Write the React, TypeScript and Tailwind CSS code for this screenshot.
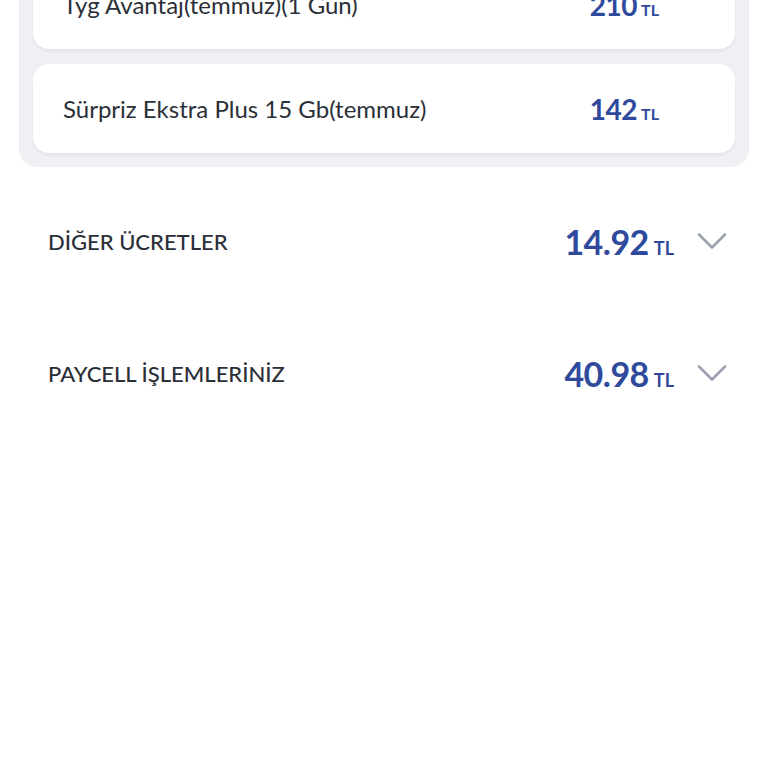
import { ChevronDown } from "lucide-react";

interface Item {
  name: string;
  amount: string;
}

const items: Item[] = [
  { name: "Tyg Avantaj(temmuz)(1 Gün)", amount: "210" },
  { name: "Sürpriz Ekstra Plus 15 Gb(temmuz)", amount: "142" },
];

const sections: Item[] = [
  { name: "DİĞER ÜCRETLER", amount: "14.92" },
  { name: "PAYCELL İŞLEMLERİNİZ", amount: "40.98" },
];

export default function App() {
  return (
    <div
      className="min-h-[768px] bg-white overflow-hidden"
      style={{ fontFamily: "Lato, 'Noto Sans', sans-serif" }}
    >
      <div className="mx-[19px] -mt-[54px] rounded-b-[18px] bg-[#eef0f3] px-[14px] pt-[14px] pb-[14px] flex flex-col gap-[15px]">
        {items.map((item) => (
          <div
            key={item.name}
            className="h-[89px] bg-white rounded-[16px] shadow-[0_2px_4px_rgba(0,0,0,0.06)] flex items-center justify-between pl-[30px] pr-[76px]"
          >
            <span className="text-[24px] text-[#2b2f38]">{item.name}</span>
            <span className="flex items-baseline gap-[4px] text-[#2f4a9c] font-bold">
              <span className="text-[28px] tracking-[-0.5px]">{item.amount}</span>
              <span className="text-[16px]">TL</span>
            </span>
          </div>
        ))}
      </div>
      <div className="mt-[8px] pl-[48px] pr-[30px]">
        {sections.map((s) => (
          <div key={s.name} className="h-[132px] flex items-center justify-between">
            <span className="text-[22px] text-[#2b2f38] font-medium">{s.name}</span>
            <div className="flex items-center">
              <span className="flex items-baseline gap-[5px] text-[#2f4a9c] font-bold">
                <span className="text-[34px] tracking-[-0.5px]">{s.amount}</span>
                <span className="text-[18px]">TL</span>
              </span>
              <ChevronDown className="ml-[12px] w-[52px] h-[52px] text-[#9aa1ad]" strokeWidth={1.15} />
            </div>
          </div>
        ))}
      </div>
    </div>
  );
}
